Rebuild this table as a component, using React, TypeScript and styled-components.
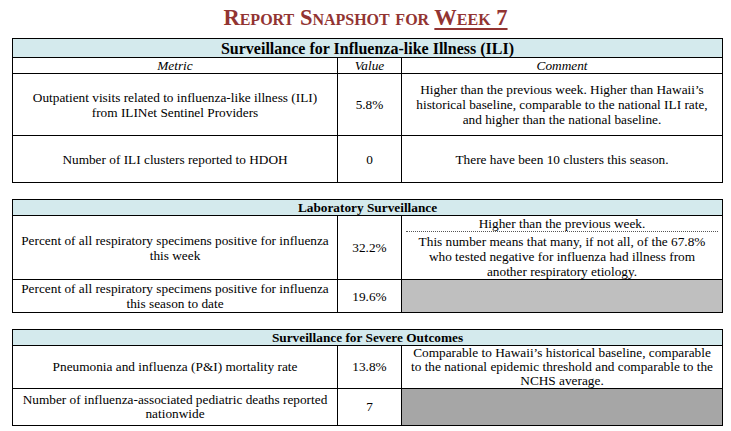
import styled, { createGlobalStyle } from 'styled-components';

const GlobalStyle = createGlobalStyle`
  html, body {
    margin: 0;
    padding: 0;
    background: #ffffff;
  }
  body {
    font-family: "Liberation Serif", "Times New Roman", serif;
    color: #000000;
  }
`;

const Page = styled.div`
  width: 731px;
  padding: 0 0 0 12px;
  box-sizing: border-box;
  display: flex;
  flex-direction: column;
`;

const Heading = styled.h1`
  margin: 0;
  height: 38px;
  padding: 4px 12px 0 0;
  box-sizing: border-box;
  text-align: center;
  font-size: 22.5px;
  line-height: 28px;
  font-weight: bold;
  font-variant: small-caps;
  color: #923432;
`;

const Under = styled.span`
  text-decoration: underline;
  text-decoration-thickness: 2px;
  text-underline-offset: 3px;
`;

const Table = styled.table<{ $gap?: number; $lh?: number }>`
  width: 710px;
  border-collapse: collapse;
  table-layout: fixed;
  margin-bottom: ${(p) => p.$gap ?? 0}px;
  font-family: "Liberation Serif", "Times New Roman", serif;
  font-size: 13.3px;
  line-height: ${(p) => p.$lh ?? 15}px;
`;

const TitleCell = styled.th<{ $big?: boolean }>`
  background: #d4eaed;
  border: 1px solid #000;
  padding: 0;
  font-weight: bold;
  font-size: ${(p) => (p.$big ? '16px' : '13.3px')};
  line-height: ${(p) => (p.$big ? '17px' : '14px')};
  text-align: center;
`;

const HeadCell = styled.th`
  border: 1px solid #000;
  padding: 0;
  font-weight: normal;
  font-style: italic;
  text-align: center;
  line-height: 14px;
`;

const Row = styled.tr<{ $h: number }>`
  height: ${(p) => p.$h}px;
`;

const Cell = styled.td<{ $fill?: string }>`
  border: 1px solid #000;
  padding: 0 6px;
  text-align: center;
  vertical-align: middle;
  background: ${(p) => p.$fill ?? 'transparent'};
`;

const Split = styled.div`
  display: flex;
  flex-direction: column;
`;

const SplitTop = styled.div`
  margin: 0 -2px 2px;
  border-bottom: 1.5px dotted #555;
`;

const Columns = () => (
  <colgroup>
    <col style={{ width: 325 }} />
    <col style={{ width: 64 }} />
    <col style={{ width: 321 }} />
  </colgroup>
);

export default function App() {
  return (
    <Page>
      <GlobalStyle />
      <Heading>
        Report Snapshot for <Under>Week 7</Under>
      </Heading>

      <Table $gap={16}>
        <Columns />
        <thead>
          <Row $h={19}>
            <TitleCell colSpan={3} $big>
              Surveillance for Influenza-like Illness (ILI)
            </TitleCell>
          </Row>
          <Row $h={16}>
            <HeadCell>Metric</HeadCell>
            <HeadCell>Value</HeadCell>
            <HeadCell>Comment</HeadCell>
          </Row>
        </thead>
        <tbody>
          <Row $h={62}>
            <Cell>
              Outpatient visits related to influenza-like illness (ILI)
              <br />
              from ILINet Sentinel Providers
            </Cell>
            <Cell>5.8%</Cell>
            <Cell>
              Higher than the previous week. Higher than Hawaii’s historical baseline, comparable to the
              national ILI rate, and higher than the national baseline.
            </Cell>
          </Row>
          <Row $h={47}>
            <Cell>Number of ILI clusters reported to HDOH</Cell>
            <Cell>0</Cell>
            <Cell>There have been 10 clusters this season.</Cell>
          </Row>
        </tbody>
      </Table>

      <Table $gap={16}>
        <Columns />
        <thead>
          <Row $h={16}>
            <TitleCell colSpan={3}>Laboratory Surveillance</TitleCell>
          </Row>
        </thead>
        <tbody>
          <Row $h={63}>
            <Cell>Percent of all respiratory specimens positive for influenza this week</Cell>
            <Cell>32.2%</Cell>
            <Cell>
              <Split>
                <SplitTop>Higher than the previous week.</SplitTop>
                <div>
                  This number means that many, if not all, of the 67.8% who tested negative for influenza
                  had illness from another respiratory etiology.
                </div>
              </Split>
            </Cell>
          </Row>
          <Row $h={33}>
            <Cell>Percent of all respiratory specimens positive for influenza this season to date</Cell>
            <Cell>19.6%</Cell>
            <Cell $fill="#bfbfbf" />
          </Row>
        </tbody>
      </Table>

      <Table $lh={14}>
        <Columns />
        <thead>
          <Row $h={16}>
            <TitleCell colSpan={3}>Surveillance for Severe Outcomes</TitleCell>
          </Row>
        </thead>
        <tbody>
          <Row $h={43}>
            <Cell>Pneumonia and influenza (P&amp;I) mortality rate</Cell>
            <Cell>13.8%</Cell>
            <Cell>
              Comparable to Hawaii’s historical baseline, comparable to the national epidemic threshold and
              comparable to the NCHS average.
            </Cell>
          </Row>
          <Row $h={37}>
            <Cell>Number of influenza-associated pediatric deaths reported nationwide</Cell>
            <Cell>7</Cell>
            <Cell $fill="#a6a6a6" />
          </Row>
        </tbody>
      </Table>
    </Page>
  );
}
